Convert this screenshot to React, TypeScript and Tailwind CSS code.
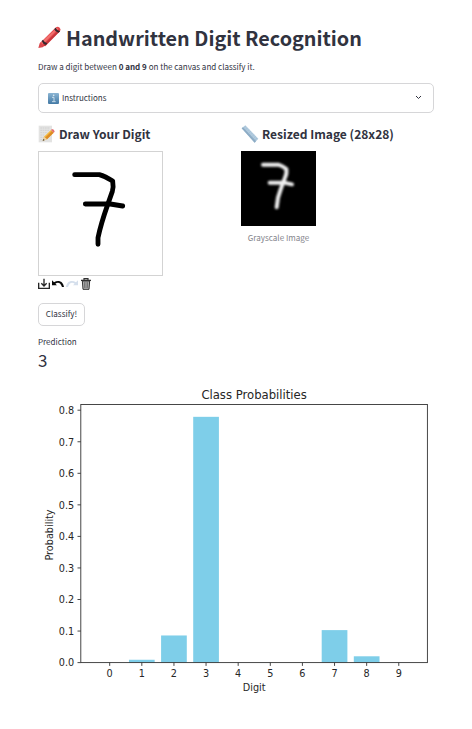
import React from "react";

const probabilities = [0, 0.009, 0.086, 0.779, 0, 0, 0, 0.103, 0.02, 0];
const ticks = [0, 1, 2, 3, 4, 5, 6, 7, 8];
const BASE = 662.6;
const xAt = (digit: number) => 109.7 + digit * 32.12;
const yAt = (value: number) => BASE - value * 315.5;

function Crayon() {
  return (
    <svg className="h-6 w-6 shrink-0" viewBox="0 0 72 72">
      <path d="M1 66 L5 52 L13 46 L23 57 L14 64 Z" fill="#d9474c" />
      <path d="M6 51 L54 4 Q59 0 65 5 Q70 10 66 16 L22 61 Q12 60 6 51Z" fill="#e2474b" />
      <path d="M9 50 L56 5 L61 8 L15 55Z" fill="#f2706e" />
      <path d="M20 61 L66 15 L63 11 L16 57Z" fill="#c4363c" />
      <path d="M11 45 L15 41 Q19 49 28 52 L24 57 Q14 54 11 45Z M49 9 L53 5 Q56 14 66 16 L62 20 Q51 17 49 9Z" fill="#35272d" />
    </svg>
  );
}

function InfoBadge() {
  return (
    <svg className="h-[11px] w-[11px] shrink-0" viewBox="0 0 33 33">
      <defs>
        <linearGradient id="info" x2="0" y2="1">
          <stop stopColor="#8bb5d3" />
          <stop offset="1" stopColor="#4379a5" />
        </linearGradient>
      </defs>
      <rect width="33" height="33" rx="3" fill="url(#info)" />
      <path d="M12 13 H18 V25 M12 26 H23" fill="none" stroke="#dce9f2" strokeWidth="2.5" />
      <circle cx="17" cy="7" r="2.5" fill="#dce9f2" />
    </svg>
  );
}

function Memo() {
  return (
    <svg className="h-[18px] w-[17px] shrink-0" viewBox="0 0 51 54">
      <path d="M2 2 H42 V52 H2Z" fill="#e3e3e2" />
      <path d="M7 9H36M7 16H34M7 23H29M7 30H21M7 37H17M7 44H15" stroke="#c8c9ca" strokeWidth="2" strokeDasharray="5 2" />
      <path d="M14 48 L18 35 L39 15 L47 23 L27 43Z" fill="#f4b93f" />
      <path d="M21 38 L42 18 L47 23 L27 43Z" fill="#dc8b26" />
      <path d="M14 48 L18 35 L27 43Z" fill="#ecd2a5" />
      <path d="M14 48 L16 42 L20 45Z" fill="#3d3b3b" />
      <path d="M39 15 L42 12 Q49 13 50 20 L47 23Z" fill="#e56f70" />
    </svg>
  );
}

function Ruler() {
  return (
    <svg className="h-[18px] w-[18px] shrink-0" viewBox="0 0 54 54">
      <path d="M2 10 L13 1 L52 41 L41 53Z" fill="#b0cade" />
      <path d="M2 10 L6 7 L45 48 L41 53Z" fill="#8dacc5" />
      <path d="M14 4l-4 4M19 9l-6 6M24 14l-4 4M29 19l-6 6M34 24l-4 4M39 29l-6 6M44 34l-4 4M48 39l-6 6" stroke="#9ab8cf" strokeWidth="1.5" />
    </svg>
  );
}

function Toolbar() {
  return (
    <div className="flex h-4 items-center">
      <svg className="h-4 w-[56px]" viewBox="0 0 168 48">
        <g fill="none" stroke="#252525" strokeWidth="4">
          <path d="M2 20 V37 H34 V20" />
          <path d="M18 8 V30 M10 22 L18 30 L26 22" />
        </g>
        <path d="M42 13 V28 H57 L52 23 C60 17 68 20 72 33 H78 C76 15 60 10 48 19Z" fill="#090909" />
        <path d="M120 13 V28 H105 L110 23 C102 17 94 20 90 33 H84 C86 15 102 10 114 19Z" fill="#d5dfec" />
        <path d="M133 15 H155 L153 40 H135Z" fill="#b4b4b4" stroke="#353535" strokeWidth="3" />
        <path d="M129 13 H159 M138 11 V8 H150 V11" fill="none" stroke="#303030" strokeWidth="3.5" />
        <path d="M139 18 L140 36 M144 18 V36 M149 18 L148 36" stroke="#555" strokeWidth="2" />
      </svg>
    </div>
  );
}

function Drawing() {
  return (
    <svg className="block h-[125px] w-[125px]" viewBox="24 18 375 375">
      <rect x="25.5" y="19.5" width="372" height="372" fill="#fff" stroke="#d3d3d3" strokeWidth="3" />
      <g fill="none" stroke="#000" strokeWidth="14.5" strokeLinecap="round" strokeLinejoin="round">
        <path d="M134 89 H208 Q226 94 248 108 Q251 126 247 139 L232 182 Q213 236 204 278 V298" />
        <path d="M166 177 H241 L278 183" />
      </g>
    </svg>
  );
}

function ResizedDrawing() {
  return (
    <svg className="block h-[75px] w-[75px]" viewBox="33 18 225 225">
      <defs>
        <filter id="soften" x="-20%" y="-20%" width="140%" height="140%">
          <feGaussianBlur stdDeviation="2.8" />
        </filter>
      </defs>
      <rect x="33" y="18" width="225" height="225" fill="#000" />
      <g fill="none" stroke="#f0f0f0" strokeWidth="12" strokeLinecap="round" strokeLinejoin="round" filter="url(#soften)">
        <path d="M99 59 H145 Q158 63 169 72 Q171 87 165 98 L153 130 L144 158 L140 187" />
        <path d="M119 113 H162 L186 118" />
      </g>
    </svg>
  );
}

function Chart() {
  return (
    <svg className="mt-[7px] block h-[320px] w-[396px] font-['DejaVu_Sans',sans-serif]" viewBox="38 380 396 320" fill="#262626">
      {probabilities.map((p, digit) => (
        <rect key={digit} x={xAt(digit) - 12.85} y={yAt(p)} width="25.7" height={BASE - yAt(p)} fill="#7ecee9" />
      ))}
      <rect x="80.8" y="404.5" width="346.6" height="258.1" fill="none" stroke="#333" strokeWidth="0.9" />
      <g fontSize="9.7" textAnchor="middle">
        {probabilities.map((_, digit) => (
          <g key={digit}>
            <path d={`M${xAt(digit)} 662.6v3.3`} stroke="#333" strokeWidth="0.9" />
            <text x={xAt(digit)} y="677.2">{digit}</text>
          </g>
        ))}
        <text x="254.2" y="690.8">Digit</text>
        <text transform="translate(53 535) rotate(-90)">Probability</text>
      </g>
      <g fontSize="9.7" textAnchor="end">
        {ticks.map((tick) => (
          <g key={tick}>
            <path d={`M77.5 ${yAt(tick / 10)}h3.3`} stroke="#333" strokeWidth="0.9" />
            <text x="74.2" y={yAt(tick / 10) + 3.8}>{(tick / 10).toFixed(1)}</text>
          </g>
        ))}
      </g>
      <text x="254.1" y="398.5" fontSize="11.65" textAnchor="middle">Class Probabilities</text>
    </svg>
  );
}

export default function App() {
  return (
    <main className="h-[729px] w-[472px] overflow-hidden bg-white px-[38px] pt-[22px] font-['Noto_Sans_CJK_SC',sans-serif] whitespace-nowrap text-[#31333f]">
      <h1 className="flex h-8 items-center gap-1 text-[19.8px] leading-8 font-bold">
        <Crayon />
        <span>Handwritten Digit Recognition</span>
      </h1>
      <p className="mt-[7px] h-3 text-[8.04px] leading-3">
        Draw a digit between <b>0 and 9</b> on the canvas and classify it.
      </p>
      <section className="mt-[10px] flex h-[30px] items-center rounded-[5px] border border-[#d6d6d8] px-[9px] text-[8px]">
        <InfoBadge />
        <span className="ml-[3px]">Instructions</span>
        <svg className="mr-[2px] mb-[2px] ml-auto h-[5px] w-[7px]" viewBox="0 0 7 5" fill="none" stroke="#31333f" strokeWidth="1">
          <path d="M1 1 L3.5 3.5 L6 1" />
        </svg>
      </section>
      <div className="mt-3 grid grid-cols-[203px_193px]">
        <section>
          <h2 className="flex h-[18px] items-center gap-1 text-[12.05px] leading-[18px] font-bold">
            <Memo />
            <span>Draw Your Digit</span>
          </h2>
          <div className="mt-2">
            <Drawing />
            <Toolbar />
          </div>
        </section>
        <section>
          <h2 className="flex h-[18px] items-center gap-[3px] text-[12.05px] leading-[18px] font-bold">
            <Ruler />
            <span>Resized Image (28x28)</span>
          </h2>
          <figure className="mt-2 w-[75px]">
            <ResizedDrawing />
            <figcaption className="mt-[6px] text-center text-[8.1px] leading-3 text-[#84858c]">Grayscale Image</figcaption>
          </figure>
        </section>
      </div>
      <button className="mt-[11px] flex h-[23px] w-[47px] items-center justify-center rounded-[5px] border border-[#d6d6d8] text-[8.1px]">Classify!</button>
      <div className="mt-[10px] h-3 text-[8.04px] leading-3">Prediction</div>
      <div className="h-[25px] text-[17px] leading-[23px]">3</div>
      <Chart />
    </main>
  );
}
